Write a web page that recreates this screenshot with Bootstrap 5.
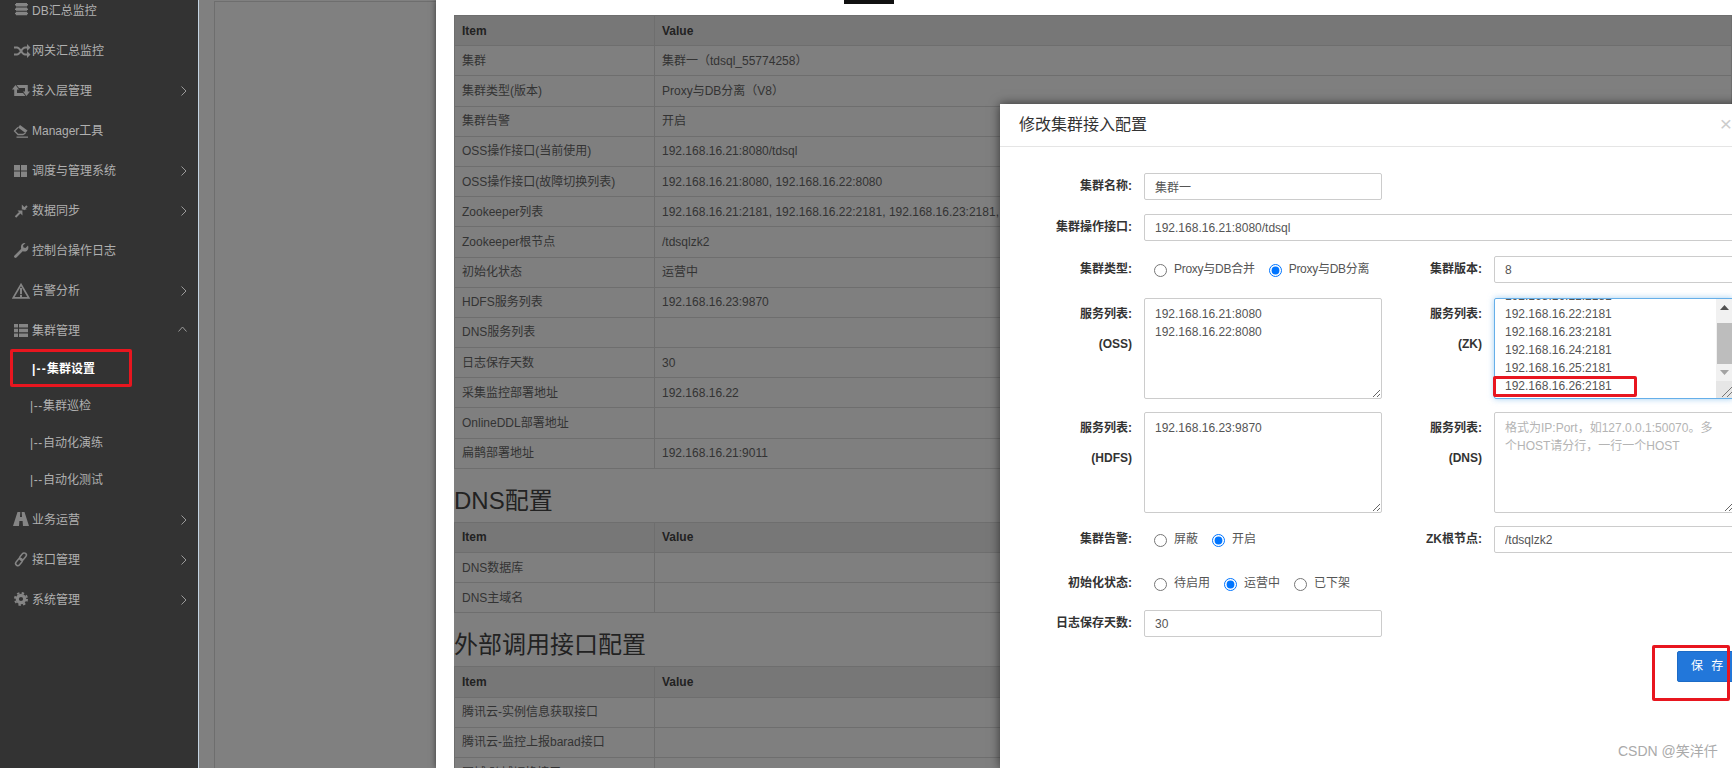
<!DOCTYPE html>
<html lang="zh">
<head>
<meta charset="utf-8">
<title>集群设置</title>
<link href="https://cdn.jsdelivr.net/npm/bootstrap@5.3.0/dist/css/bootstrap.min.css" rel="stylesheet">
<style>
html,body{height:768px;overflow:hidden;background:#fff}
body{font:12px/18px "Liberation Sans","Noto Sans CJK SC",sans-serif;color:#333;position:relative}
.shell{width:1732px;height:768px;overflow:hidden}
.side{width:199px;height:768px;background:#333;border-right:1px solid #c4d4e2;flex:none}
.side-list{margin-top:-9px}
.side-list .nav-link{height:40px;padding:0;color:#b0b0b0;font-size:12px;display:flex;align-items:center}
.side-list .sub-link{height:37px;padding-left:30px;display:block;line-height:37px}
.side-list .sub-link.on{color:#fff;font-weight:700;padding-left:32px}
.tree{letter-spacing:.6px}
.on .tree{letter-spacing:1.2px}
.side-gap{height:1px}
.ic{width:19px;height:16px;margin:0 1px 0 12px;flex:none;fill:#858585;stroke:none}
.ic .ln{fill:none;stroke:#858585}
.chev{width:6px;height:10px;margin-left:auto;margin-right:11px;fill:none;stroke:#9a9a9a;stroke-width:1}
.chev-up{width:9px;height:6px;margin-right:11px;margin-bottom:4px}
.dim{width:237px;height:768px;background:#808080;padding-left:15px;padding-top:1px;flex:none}
.dim-in{height:767px;border-left:1px solid #6e6e6e;border-top:1px solid #6e6e6e}
.page{width:1296px;height:768px;background:#fff;padding:15px 0 0 18px;box-shadow:0 0 6px rgba(0,0,0,.55);flex:none;position:relative}
.topbit{position:absolute;left:408px;top:0;width:50px;height:4px;background:#111}
.shade{background:#7f7f7f;width:1278px;height:753px;color:#333}
.shade .table{--bs-table-bg:transparent;--bs-table-color:#333;border-color:#6e6e6e;margin:0;table-layout:fixed;width:1278px;font-size:12px}
.shade .table th,.shade .table td{padding:5.6px 7px;line-height:18px;border-color:#6e6e6e;height:30.13px;white-space:nowrap;overflow:hidden}
.shade .table th{background:#777;font-weight:700;color:#222}
.col-a{width:200px}
.sec-title{font-size:24px;line-height:26px;font-weight:400;color:#222;margin:19px 0 8px}
.dlg{position:absolute;left:1000px;top:104px;width:750px;height:664px;border:0;border-radius:0;background:#fff;box-shadow:0 0 10px rgba(0,0,0,.6)}
.dlg .modal-header{height:43px;padding:0 0 0 19px;border-bottom:1px solid #e5e5e5;border-radius:0;display:flex;justify-content:flex-start}
.dlg .modal-title{font-size:16px;line-height:20px;font-weight:400;color:#333;margin-top:0}
.shut{margin-left:auto;margin-right:18px;color:#ccc;font-size:21px;line-height:20px;margin-bottom:3px}
.dlg .modal-body{padding:26px 0 0;flex:none}
.frow{display:flex;height:27px}
.m14{margin-bottom:14px}.m15{margin-bottom:15px}.m17{margin-bottom:17px}.m13{margin-bottom:13px}
.frow-tall{height:101px}
.half{display:flex;width:382px;flex:none}
.lab{width:132px;flex:none;text-align:right;font-weight:700;line-height:27px;color:#333;margin:0}
.lab-two{line-height:30px;padding-top:1px}
.half-r{width:352px}
.half-r .lab{width:100px}
.fc{margin-left:12px;width:238px;height:27px;padding:3px 10px;font-size:12px;line-height:18px;color:#555;border:1px solid #ccc;border-radius:2px;font-family:inherit;flex:none}
.fc-wide{width:590px}
.fc-r{width:240px}
textarea.fc{height:101px;min-height:101px;padding:6px 10px;line-height:18px}
textarea.fc::placeholder{color:#b4b4b4;opacity:1}
.radios{display:flex;align-items:center;margin-left:22px}
.radios input{width:13px;height:13px;margin:2px 7px 0 0;flex:none}
.radios label{margin-right:14px;color:#555;margin-top:-2px;white-space:nowrap}
.radios .tight{letter-spacing:-.27px}
.zkbox{margin-left:12px;width:240px;height:101px;border:1px solid #66afe9;box-shadow:0 0 6px rgba(102,175,233,.6);border-radius:2px;display:flex;overflow:hidden;background:#fff;flex:none}
.zk-lines{flex:1;padding:0 10px;margin-top:-12px;color:#555;line-height:18px}
.zk-bar{width:17px;flex:none;background:#f1f1f1;display:flex;flex-direction:column;align-items:center}
.zk-arrow{height:17px;width:17px;fill:#505050;flex:none}
.zk-arrow.off{fill:#a3a3a3}
.zk-thumb{height:41px;width:15px;background:#bdbdbd;margin-top:7px;flex:none}
.zk-corner{width:17px;height:17px;margin-top:auto;background:#e6e6e6;stroke:#777;stroke-width:1;fill:none;flex:none}
.save{margin-left:677px;margin-top:14px;width:70px;height:31px;padding:0 0 0 13px;text-align:left;font-size:12px;letter-spacing:2.4px;border-radius:2px;background:#2277da;border:1px solid #1c6bc6;color:#fff;line-height:29px}
.mark-box{position:absolute;border:3px solid #e8161f;border-radius:2px;pointer-events:none}
.mb1{left:10px;top:349px;width:122px;height:38px}
.mb2{left:1493px;top:376px;width:144px;height:21px}
.mb3{left:1652px;top:645px;width:78px;height:56px}
.wm{position:absolute;left:1618px;top:742px;font-size:14px;line-height:18px;color:#aaa}
</style>
</head>
<body>
<div class="shell d-flex">
  <aside class="side">
    <ul class="nav flex-column side-list">
      <li class="nav-item"><a class="nav-link" href="#"><svg class="ic" viewBox="0 0 19 16"><path d="M4 0h11v3.400H4zM4 4.400h11v3.400H4zM4 8.800h11v3.400H4zM3 1h1v1.500H3zM15 1h1v1.500h-1zM3 5.400h1v1.500H3zM15 5.400h1v1.500h-1zM3 9.800h1v1.500H3zM15 9.800h1v1.500h-1z"/></svg>DB汇总监控</a></li>
      <li class="nav-item"><a class="nav-link" href="#"><svg class="ic" viewBox="0 0 19 16"><path class="ln" stroke-width="2" d="M2 4.500h3c3.500 0 4.500 7 8 7h2M2 11.500h3c3.500 0 4.500-7 8-7h2"/><path d="M15 1l3.500 3.500L15 8zM15 8l3.500 3.500L15 15z"/></svg>网关汇总监控</a></li>
      <li class="nav-item"><a class="nav-link" href="#"><svg class="ic" viewBox="0 0 19 16"><path d="M0 6.500 3.500 2 7 6.500H5V10h6l2.500 3H2.200V6.500zM18 8.500 14.500 13 11 8.500h2V5H7L4.500 2h11.300v6.500z"/></svg>接入层管理<svg class="chev" viewBox="0 0 6 10"><path d="M.5.500 5 5 .5 9.500"/></svg></a></li>
      <li class="nav-item"><a class="nav-link" href="#"><svg class="ic" viewBox="0 0 19 16"><path d="M8 2l7.500 5.500-2 2.500L6 4.500z"/><path class="ln" stroke-width="1.300" d="M6 4.500l-3.500 3.500 3.500 3.500h5l2.500-1.500"/><path d="M4.500 13.500h11.500v1.300H4.500z"/></svg>Manager工具</a></li>
      <li class="nav-item"><a class="nav-link" href="#"><svg class="ic" viewBox="0 0 19 16"><path d="M2 2h6v5.500H2zM9 2h6v5.500H9zM2 8.500h6V14H2zM9 8.500h6V14H9z"/></svg>调度与管理系统<svg class="chev" viewBox="0 0 6 10"><path d="M.5.500 5 5 .5 9.500"/></svg></a></li>
      <li class="nav-item"><a class="nav-link" href="#"><svg class="ic" viewBox="0 0 19 16"><path class="ln" stroke-width="2" d="M3.500 14 8 9.500M15 3l-3.500 3.500"/><path d="M5.500 7.500l5 5-.1-5.100zM9.800 6.500l4.900-.1-4.900-4.900z"/></svg>数据同步<svg class="chev" viewBox="0 0 6 10"><path d="M.5.500 5 5 .5 9.500"/></svg></a></li>
      <li class="nav-item"><a class="nav-link" href="#"><svg class="ic" viewBox="0 0 19 16"><path class="ln" stroke-width="2.800" stroke-linecap="round" d="M3.500 13.500 10 7"/><path d="M16 2.500 13.500 5l-2-.500-.5-2L13.500 0c-2.500-.5-5 1.500-4.500 5 .1 1 .5 2 1.500 3 1 .5 2 .8 3 .5 2.500-.5 3.500-3.500 2.500-6z"/></svg>控制台操作日志</a></li>
      <li class="nav-item"><a class="nav-link" href="#"><svg class="ic" viewBox="0 0 19 16"><path class="ln" stroke-width="1.700" d="M9 1.500 16.800 14.800H1.200z"/><path d="M8 5h2v6H8zM8 11.800h2v2.200H8z"/></svg>告警分析<svg class="chev" viewBox="0 0 6 10"><path d="M.5.500 5 5 .5 9.500"/></svg></a></li>
      <li class="nav-item"><a class="nav-link" href="#"><svg class="ic" viewBox="0 0 19 16"><path d="M2 1h4v3.600H2zM7 1h9v3.600H7zM2 5.700h4v3.600H2zM7 5.700h9v3.600H7zM2 10.400h4V14H2zM7 10.400h9V14H7z"/></svg>集群管理<svg class="chev chev-up" viewBox="0 0 9 6"><path d="M.5 5.500 4.500 1l4 4.500"/></svg></a></li>
      <li class="nav-item"><a class="nav-link sub-link on" href="#"><span class="tree">|--</span>集群设置</a></li>
      <li class="nav-item"><a class="nav-link sub-link" href="#"><span class="tree">|--</span>集群巡检</a></li>
      <li class="nav-item"><a class="nav-link sub-link" href="#"><span class="tree">|--</span>自动化演练</a></li>
      <li class="nav-item"><a class="nav-link sub-link" href="#"><span class="tree">|--</span>自动化测试</a></li>
      <li class="side-gap"></li>
      <li class="nav-item"><a class="nav-link" href="#"><svg class="ic" viewBox="0 0 19 16"><path d="M5.500 0h2.800l-.3 5h2l-.3-5h2.800L17 14h-6l-.4-5H7.400L7 14H1z"/></svg>业务运营<svg class="chev" viewBox="0 0 6 10"><path d="M.5.500 5 5 .5 9.500"/></svg></a></li>
      <li class="nav-item"><a class="nav-link" href="#"><svg class="ic" viewBox="0 0 19 16"><rect x="8.750" y=".5" width="4.500" height="8" rx="2.250" transform="rotate(40 11 4.500)" fill="none" stroke="#858585" stroke-width="1.500"/><rect x="4.750" y="6" width="4.500" height="8" rx="2.250" transform="rotate(40 7 10)" fill="none" stroke="#858585" stroke-width="1.500"/></svg>接口管理<svg class="chev" viewBox="0 0 6 10"><path d="M.5.500 5 5 .5 9.500"/></svg></a></li>
      <li class="nav-item"><a class="nav-link" href="#"><svg class="ic" viewBox="0 0 19 16"><circle class="ln" cx="9" cy="7" r="3.700" stroke-width="3.200"/><circle class="ln" cx="9" cy="7" r="6" stroke-width="2" stroke-dasharray="2.400 2.312"/></svg>系统管理<svg class="chev" viewBox="0 0 6 10"><path d="M.5.500 5 5 .5 9.500"/></svg></a></li>
    </ul>
  </aside>
  <div class="dim"><div class="dim-in"></div></div>
  <main class="page">
    <div class="topbit"></div>
    <div class="shade">
      <table class="table table-bordered">
        <colgroup><col class="col-a"><col></colgroup>
        <thead><tr><th>Item</th><th>Value</th></tr></thead>
        <tbody>
          <tr><td>集群</td><td>集群一（tdsql_55774258）</td></tr>
          <tr><td>集群类型(版本)</td><td>Proxy与DB分离（V8）</td></tr>
          <tr><td>集群告警</td><td>开启</td></tr>
          <tr><td>OSS操作接口(当前使用)</td><td>192.168.16.21:8080/tdsql</td></tr>
          <tr><td>OSS操作接口(故障切换列表)</td><td>192.168.16.21:8080, 192.168.16.22:8080</td></tr>
          <tr><td>Zookeeper列表</td><td>192.168.16.21:2181, 192.168.16.22:2181, 192.168.16.23:2181, 192.168.16.24:2181, 192.168.16.25:2181</td></tr>
          <tr><td>Zookeeper根节点</td><td>/tdsqlzk2</td></tr>
          <tr><td>初始化状态</td><td>运营中</td></tr>
          <tr><td>HDFS服务列表</td><td>192.168.16.23:9870</td></tr>
          <tr><td>DNS服务列表</td><td></td></tr>
          <tr><td>日志保存天数</td><td>30</td></tr>
          <tr><td>采集监控部署地址</td><td>192.168.16.22</td></tr>
          <tr><td>OnlineDDL部署地址</td><td></td></tr>
          <tr><td>扁鹊部署地址</td><td>192.168.16.21:9011</td></tr>
        </tbody>
      </table>
      <h3 class="sec-title">DNS配置</h3>
      <table class="table table-bordered">
        <colgroup><col class="col-a"><col></colgroup>
        <thead><tr><th>Item</th><th>Value</th></tr></thead>
        <tbody>
          <tr><td>DNS数据库</td><td></td></tr>
          <tr><td>DNS主域名</td><td></td></tr>
        </tbody>
      </table>
      <h3 class="sec-title">外部调用接口配置</h3>
      <table class="table table-bordered">
        <colgroup><col class="col-a"><col></colgroup>
        <thead><tr><th>Item</th><th>Value</th></tr></thead>
        <tbody>
          <tr><td>腾讯云-实例信息获取接口</td><td></td></tr>
          <tr><td>腾讯云-监控上报barad接口</td><td></td></tr>
          <tr><td>同城/跨城切换接口</td><td></td></tr>
        </tbody>
      </table>
    </div>
  </main>
</div>

<section class="modal-content dlg">
  <header class="modal-header">
    <h5 class="modal-title">修改集群接入配置</h5>
    <span class="shut">×</span>
  </header>
  <div class="modal-body">
    <div class="frow m14"><div class="half"><label class="lab">集群名称:</label><input class="form-control fc" value="集群一"></div></div>
    <div class="frow m15"><div class="half"><label class="lab">集群操作接口:</label><input class="form-control fc fc-wide" value="192.168.16.21:8080/tdsql"></div></div>
    <div class="frow m15">
      <div class="half"><label class="lab">集群类型:</label>
        <div class="radios"><input type="radio" name="t" id="t1"><label for="t1" class="tight">Proxy与DB合并</label><input type="radio" name="t" id="t2" checked><label for="t2" class="tight">Proxy与DB分离</label></div></div>
      <div class="half half-r"><label class="lab">集群版本:</label><input class="form-control fc fc-r" value="8"></div>
    </div>
    <div class="frow frow-tall m13">
      <div class="half"><div class="lab lab-two">服务列表:<br>(OSS)</div><textarea class="form-control fc">192.168.16.21:8080
192.168.16.22:8080</textarea></div>
      <div class="half half-r"><div class="lab lab-two">服务列表:<br>(ZK)</div>
        <div class="zkbox">
          <div class="zk-lines">192.168.16.21:2181<br>192.168.16.22:2181<br>192.168.16.23:2181<br>192.168.16.24:2181<br>192.168.16.25:2181<br>192.168.16.26:2181</div>
          <div class="zk-bar">
            <svg class="zk-arrow" viewBox="0 0 17 17"><path d="M8.500 6 13 11H4z"/></svg>
            <div class="zk-thumb"></div>
            <svg class="zk-arrow off" viewBox="0 0 17 17"><path d="M8.500 11 13 6H4z"/></svg>
            <svg class="zk-corner" viewBox="0 0 17 17"><path d="M6 16 16 6M11 16l5-5"/></svg>
          </div>
        </div></div>
    </div>
    <div class="frow frow-tall m13">
      <div class="half"><div class="lab lab-two">服务列表:<br>(HDFS)</div><textarea class="form-control fc">192.168.16.23:9870</textarea></div>
      <div class="half half-r"><div class="lab lab-two">服务列表:<br>(DNS)</div><textarea class="form-control fc fc-r" placeholder="格式为IP:Port，如127.0.0.1:50070。多个HOST请分行，一行一个HOST"></textarea></div>
    </div>
    <div class="frow m17">
      <div class="half"><label class="lab">集群告警:</label>
        <div class="radios"><input type="radio" name="a" id="a1"><label for="a1">屏蔽</label><input type="radio" name="a" id="a2" checked><label for="a2">开启</label></div></div>
      <div class="half half-r"><label class="lab">ZK根节点:</label><input class="form-control fc fc-r" value="/tdsqlzk2"></div>
    </div>
    <div class="frow m13">
      <div class="half"><label class="lab">初始化状态:</label>
        <div class="radios"><input type="radio" name="s" id="s1"><label for="s1">待启用</label><input type="radio" name="s" id="s2" checked><label for="s2">运营中</label><input type="radio" name="s" id="s3"><label for="s3">已下架</label></div></div>
    </div>
    <div class="frow"><div class="half"><label class="lab">日志保存天数:</label><input class="form-control fc" value="30"></div></div>
    <button type="button" class="btn btn-primary save">保&nbsp;存</button>
  </div>
</section>

<div class="mark-box mb1"></div>
<div class="mark-box mb2"></div>
<div class="mark-box mb3"></div>
<div class="wm">CSDN @笑洋仟</div>
<script src="https://cdn.jsdelivr.net/npm/bootstrap@5.3.0/dist/js/bootstrap.bundle.min.js"></script>
</body>
</html>
